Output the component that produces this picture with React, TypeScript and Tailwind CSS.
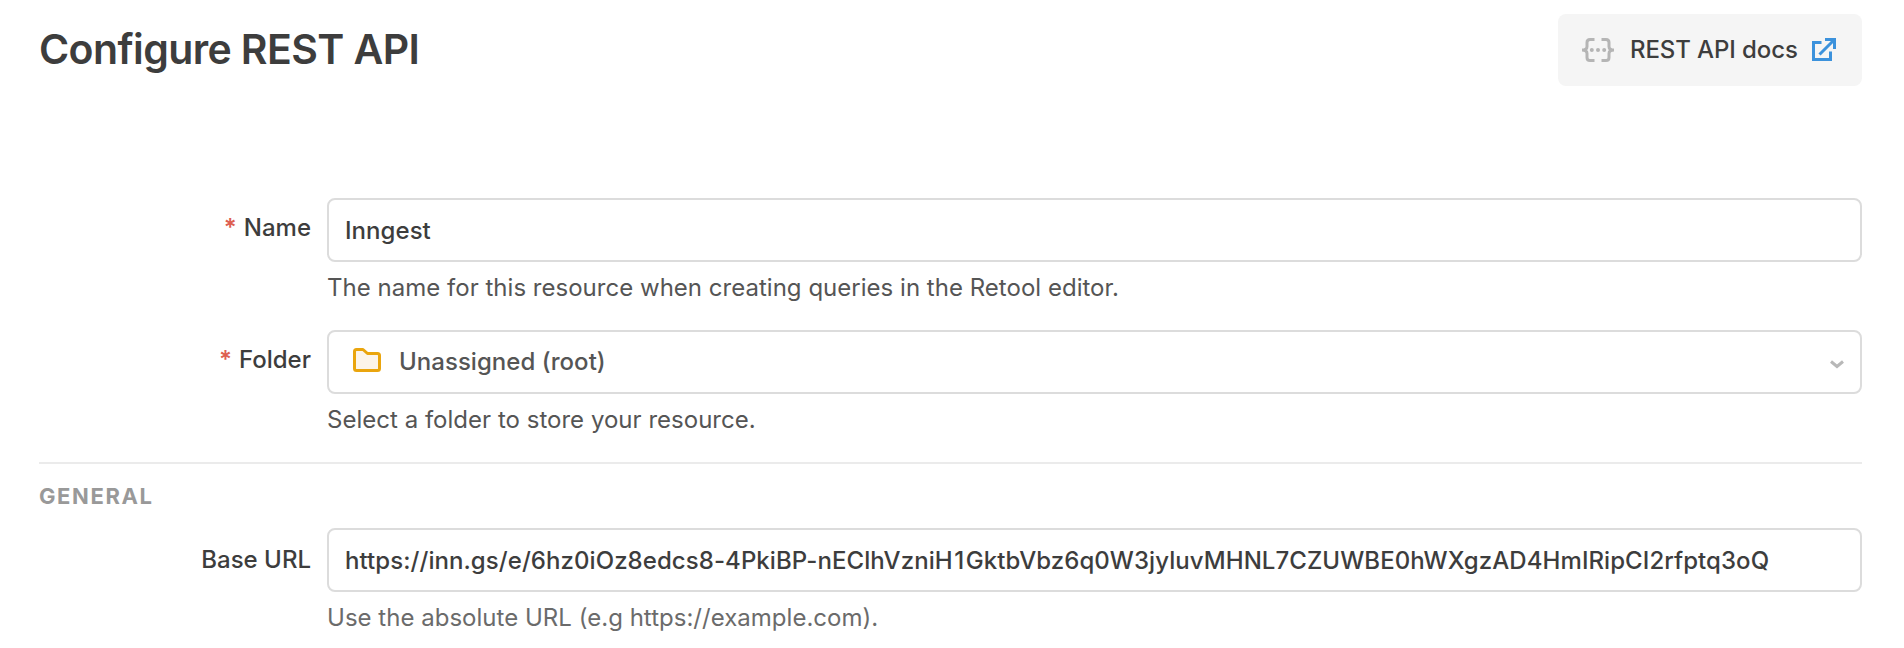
import type { ReactNode } from "react";

function Row({ label, required, labelPad, help, helpClass, height, children }: {
  label: string;
  required?: boolean;
  labelPad: string;
  help: string;
  helpClass: string;
  height: string;
  children: ReactNode;
}) {
  return (
    <div className={`flex pl-[16px] pr-[42px] ${height}`}>
      <label className={`flex w-[311px] shrink-0 justify-end gap-[7px] pr-4 text-[24px] leading-[32px] font-medium ${labelPad}`}>
        {required && <span className="font-semibold text-[#dd5f52]">*</span>}
        <span>{label}</span>
      </label>
      <div className="grow">
        <div className="flex h-[64px] items-center rounded-[8px] border-2 border-[#dcdcdc] bg-white text-[24px] font-medium whitespace-nowrap">
          {children}
        </div>
        <p className={`pt-[10px] text-[24px] leading-[32px] tracking-[0.02px] ${helpClass}`}>
          <span>{help}</span>
        </p>
      </div>
    </div>
  );
}

export default function App() {
  return (
    <div className="h-[648px] w-[1904px] overflow-hidden bg-white text-[#3d3d3d] font-['Inter',sans-serif]">
      <header className="flex h-[198px] justify-between pl-[39px] pr-[42px] pt-[14px]">
        <h1 className="pt-[11px] text-[41px] leading-[48px] font-semibold tracking-[-0.6px] whitespace-nowrap">
          <span>Configure REST API</span>
        </h1>
        <a className="flex h-[72px] w-[304px] items-center rounded-[8px] bg-[#f5f5f5] pl-[24px] text-[24px] font-medium whitespace-nowrap">
          <svg className="shrink-0" width="32" height="24" viewBox="0 0 32 24" fill="none" stroke="#b5b5b5" strokeWidth="3">
            <path d="M12.500 1.500H8Q5 1.500 5 4.500V8.500Q5 12 0 12Q5 12 5 15.500V19.500Q5 22.500 8 22.500H12.500M19.500 1.500H24Q27 1.500 27 4.500V8.500Q27 12 32 12Q27 12 27 15.500V19.500Q27 22.500 24 22.500H19.500" />
            <g fill="#b5b5b5" stroke="none">
              <circle cx="9.800" cy="12" r="2" />
              <circle cx="16" cy="12" r="2" />
              <circle cx="22.200" cy="12" r="2" />
            </g>
          </svg>
          <span className="pl-4 tracking-[-0.1px]">REST API docs</span>
          <svg className="ml-[14px] shrink-0" width="24" height="24" viewBox="0 0 24 24" fill="none" stroke="#3c92dc" strokeWidth="3">
            <path d="M9.500 4.500H1.500V21.500H18.500V13.500M13 1.500H22.500V11M22 2L7.500 16.500" />
          </svg>
        </a>
      </header>

      <Row label="Name" required labelPad="pt-[14px]" height="h-[132px]" helpClass="text-[#555]" help="The name for this resource when creating queries in the Retool editor.">
        <span className="pl-4 pt-px tracking-[0.05px]">Inngest</span>
      </Row>

      <Row label="Folder" required labelPad="pt-[14px]" height="h-[132px]" helpClass="text-[#555]" help="Select a folder to store your resource.">
        <svg className="mb-[4px] ml-[24px] shrink-0" width="28" height="24" viewBox="0 0 28 24" fill="#fcf4ea" stroke="#eaa50e" strokeWidth="3" strokeLinejoin="round">
          <path d="M3.500 1.500H10L14.500 5.500H24.500Q26.500 5.500 26.500 7.500V20.500Q26.500 22.500 24.500 22.500H3.500Q1.500 22.500 1.500 20.500V3.500Q1.500 1.500 3.500 1.500Z" />
        </svg>
        <span className="pl-[18px] tracking-[0.03px] text-[#555]">Unassigned (root)</span>
        <svg className="ml-auto mr-[16px] mt-[4px] shrink-0" width="14" height="9" viewBox="0 0 14 9" fill="none" stroke="#b8b8b8" strokeWidth="3">
          <path d="M1 1.500L7 6.500L13 1.500" />
        </svg>
      </Row>

      <h2 className="ml-[39px] mr-[42px] h-[66px] border-t-2 border-[#ebebeb] pt-4 text-[22px] font-bold tracking-[1.6px] text-[#999]">
        <span>GENERAL</span>
      </h2>

      <Row label="Base URL" labelPad="pt-[16px]" height="h-[120px]" helpClass="text-[#6b6b6b]" help="Use the absolute URL (e.g https://example.com).">
        <span className="pl-4 pt-px tracking-[0.065px]">
          https://inn.gs/e/6hz0iOz8edcs8-4PkiBP-nEClhVzniH<span className="px-[1.5px]">1</span>GktbVbz6q0W3jyluvMHNL7CZUWBE0hWXgzAD4HmIRipCI2rfptq3oQ
        </span>
      </Row>
    </div>
  );
}
